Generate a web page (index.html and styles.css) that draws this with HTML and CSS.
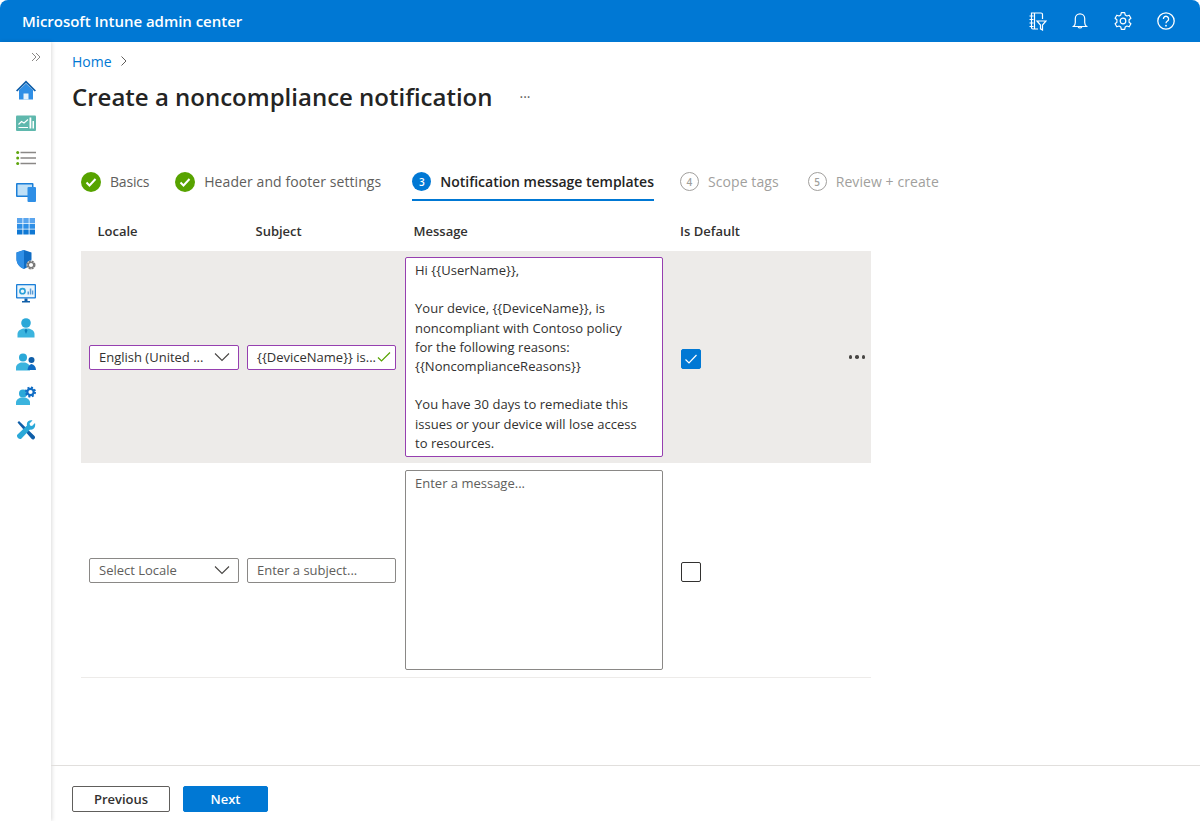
FILE: index.html
```html
<!DOCTYPE html>
<html lang="en">
  <head>
    <meta charset="UTF-8" />
    <meta name="viewport" content="width=device-width, initial-scale=1.0" />
    <title>Microsoft Intune admin center</title>
    <link rel="stylesheet" href="styles.css">
  </head>
  <body>
    <header class="topbar">
      <div class="brand">Microsoft Intune admin center</div>
      <div class="top-icons">
        <svg viewBox="0 0 20 20" width="20" height="20"><path d="M4.500 9V2h9.500a1.500 1.500 0 0 1 1.500 1.500V8M4.500 9v7.500a1.500 1.500 0 0 0 1.500 1.500h5M7.500 2v16M2.500 5h4M2.500 8.500h4M2.500 12h4M2.500 15.500h4M10 10h9l-3.500 4v5l-2-1.200V14z" fill="none" stroke="#fff" stroke-width="1.200"/></svg>
        <svg viewBox="0 0 20 20" width="20" height="20"><path d="M3.500 15.500c1.200-1 1.800-2.200 1.800-4V7.500a4.700 4.700 0 0 1 9.400 0v4c0 1.800.6 3 1.800 4zM8.200 15.700a1.900 1.900 0 0 0 3.600 0" fill="none" stroke="#fff" stroke-width="1.200"/></svg>
        <svg viewBox="0 0 20 20" width="20" height="20"><circle cx="10" cy="10" r="2.800" fill="none" stroke="#fff" stroke-width="1.200"/><path d="M8.300 1.600h3.400l.5 2.400 1.700 1 2.300-.8 1.700 3-1.800 1.600v2.400l1.800 1.600-1.700 3-2.300-.8-1.700 1-.5 2.400H8.300l-.5-2.400-1.700-1-2.300.8-1.700-3 1.800-1.600V8.800L2.100 7.200l1.700-3 2.300.8 1.700-1z" fill="none" stroke="#fff" stroke-width="1.200" stroke-linejoin="round"/></svg>
        <svg viewBox="0 0 20 20" width="20" height="20"><circle cx="10" cy="10" r="8.200" fill="none" stroke="#fff" stroke-width="1.300"/><path d="M7.400 7.900a2.600 2.600 0 1 1 4.100 2.100c-1 .7-1.500 1.100-1.500 2.300" fill="none" stroke="#fff" stroke-width="1.300"/><circle cx="10" cy="14.700" r=".9" fill="#fff"/></svg>
      </div>
    </header>

    <div class="shell">
      <nav class="sidebar">
        <svg class="collapse" viewBox="0 0 10 10" width="10" height="10"><path d="M1 1l4 4-4 4M5 1l4 4-4 4" fill="none" stroke="#8a8886" stroke-width="1"/></svg>
        <!-- home -->
        <svg viewBox="0 0 20 20" width="20" height="20"><path d="M3 10v9.500h14V10l-7-6.500z" fill="#2f8fe6"/><path d="M7.500 13.500h5v6h-5z" fill="#e6f2fb"/><path d="M0 10.500L10 .5l10 10-1.300 1L10 3 1.300 11.500z" fill="#0f5ea8"/></svg>
        <!-- dashboard -->
        <svg viewBox="0 0 20 20" width="20" height="20"><rect y="1.500" width="20" height="15.500" rx="1" fill="#5fb8ad"/><path d="M2.500 10.500l3-3 2.500 1.500 4-3.500" fill="none" stroke="#fff" stroke-width="1.100"/><path d="M2.500 13.500h9.500" stroke="#fff" stroke-width="1"/><path d="M13.500 3.500h1.800v11h-1.800zM16.500 7h1.500v7.500h-1.500z" fill="#fff"/></svg>
        <!-- list -->
        <svg viewBox="0 0 20 20" width="20" height="20"><path d="M4.500 4.500H20M4.500 10H20M4.500 15.500H20" stroke="#8a8886" stroke-width="1.500"/><circle cx="1.700" cy="4.500" r="1.500" fill="#5ea50d"/><circle cx="1.700" cy="10" r="1.500" fill="#5ea50d"/><circle cx="1.700" cy="15.500" r="1.500" fill="#5ea50d"/></svg>
        <!-- devices -->
        <svg viewBox="0 0 20 20" width="20" height="20"><rect y="1" width="17.500" height="14" rx="1" fill="#1b7fd8"/><rect x="1.500" y="2.500" width="14.500" height="11" fill="#bfe0f7"/><rect x="11.500" y="5" width="8.500" height="15" rx="1" fill="#2f8fe6"/></svg>
        <!-- apps -->
        <svg viewBox="0 0 20 20" width="20" height="20"><path d="M1 2h5.500v5H1zM7.300 2h5.400v5H7.300zM13.500 2H19v5h-5.500z" fill="#5aa5ee"/><path d="M1 7.800h5.500v5H1zM7.300 7.800h5.400v5H7.300zM13.500 7.800H19v5h-5.500z" fill="#2f8fe6"/><path d="M1 13.600h5.500v5H1zM7.300 13.600h5.400v5H7.300zM13.500 13.600H19v5h-5.500z" fill="#0f78d4"/></svg>
        <!-- endpoint security -->
        <svg viewBox="0 0 20 20" width="20" height="20"><path d="M8 0l7.500 2.500V9c0 5-3.500 8.500-7.500 10C4 17.500.5 14 .5 9V2.500z" fill="#0f6cc4"/><path d="M8 0v19C4 17.500.5 14 .5 9V2.500z" fill="#2f8fe6"/><circle cx="15" cy="15" r="4.500" fill="#fff"/><circle cx="15" cy="15" r="3.400" fill="none" stroke="#7a7a7a" stroke-width="2.200" stroke-dasharray="2 .7"/><circle cx="15" cy="15" r="2.700" fill="none" stroke="#7a7a7a" stroke-width="1.300"/></svg>
        <!-- reports -->
        <svg viewBox="0 0 20 20" width="20" height="20"><rect y="0" width="20" height="14.500" rx="1" fill="#1b7fd8"/><rect x="1.300" y="1.300" width="17.400" height="11.900" fill="#eaf5fc"/><circle cx="6.500" cy="7.200" r="2.600" fill="none" stroke="#2aa0d8" stroke-width="1.600"/><path d="M11.500 10.500v-3h1.500v3zM13.800 10.500v-6h1.500v6zM16 10.500v-4h1.300v4z" fill="#5b9bd5"/><path d="M8.500 14.500h3V17h2.500v1.500H6V17h2.500z" fill="#0f5ea8"/></svg>
        <!-- users -->
        <svg viewBox="0 0 20 20" width="20" height="20"><circle cx="10" cy="5" r="4.800" fill="#2aa8d8"/><path d="M1.500 19.500V16c0-3 3-5 6-5.500h5c3 .5 6 2.500 6 5.500v3.500z" fill="#3bb4de"/><path d="M10 10.500l-1.500 2 1.500 3.500 1.500-3.500z" fill="#0f7fb8"/></svg>
        <!-- groups -->
        <svg viewBox="0 0 20 20" width="20" height="20"><circle cx="7" cy="5.500" r="4" fill="#2aa8d8"/><path d="M0 18.500V15.500c0-2.500 2.500-4.500 5-5h4c2.500.5 5 2.500 5 5v3z" fill="#3bb4de"/><circle cx="15.500" cy="8" r="3" fill="#0f5ea8"/><path d="M11.500 18c.5-3 1.500-5.500 4-6 2.500.5 4.500 2.500 4.500 6z" fill="#0f6cc4"/></svg>
        <!-- tenant admin -->
        <svg viewBox="0 0 20 20" width="20" height="20"><circle cx="7" cy="7.500" r="4" fill="#2aa8d8"/><path d="M0 19v-2.500c0-2.500 2.500-4.500 5-5h4c2.500.5 5 2.500 5 5V19z" fill="#3bb4de"/><circle cx="14.500" cy="6" r="3.200" fill="none" stroke="#0f6cc4" stroke-width="2.200"/><circle cx="14.500" cy="6" r="4.600" fill="none" stroke="#0f6cc4" stroke-width="1.800" stroke-dasharray="2 1.600"/></svg>
        <!-- troubleshooting -->
        <svg viewBox="0 0 20 20" width="20" height="20"><path d="M1.500 2.500L3 1l15.500 15c.8 1 .8 2-.3 3-1 .8-2 .6-2.700-.3z" fill="#0f5ea8"/><path d="M19 3l-3 3-2-.5-.5-2 3-3c-3-.8-6.500 1.500-5.500 5L1.500 14.500c-2 2 2 6 4 4L14 9.500c3.500 1 6-2.500 5-6.500z" fill="#2aa8d8"/></svg>
      </nav>

      <main class="content">
        <div class="page">
          <div class="crumbs"><a class="crumb-link">Home</a><svg viewBox="0 0 8 12" width="8" height="12"><path d="M1.500 1.500L6 6l-4.500 4.500" fill="none" stroke="#605e5c" stroke-width="1"/></svg></div>
          <div class="title-row">
            <h1>Create a noncompliance notification</h1>
            <span class="title-more">···</span>
          </div>

          <ol class="steps">
            <li class="step basics">
              <svg class="step-done" viewBox="0 0 20 20" width="20" height="20"><circle cx="10" cy="10" r="10" fill="#57a300"/><path d="M5.500 10.500l3 3 6-6.500" fill="none" stroke="#fff" stroke-width="2"/></svg>
              Basics
            </li>
            <li class="step">
              <svg class="step-done" viewBox="0 0 20 20" width="20" height="20"><circle cx="10" cy="10" r="10" fill="#57a300"/><path d="M5.500 10.500l3 3 6-6.500" fill="none" stroke="#fff" stroke-width="2"/></svg>
              Header and footer settings
            </li>
            <li class="step current"><span class="num">3</span>Notification message templates</li>
            <li class="step todo"><span class="num">4</span>Scope tags</li>
            <li class="step todo"><span class="num">5</span>Review + create</li>
          </ol>

          <div class="grid-head row-cols">
            <div>Locale</div>
            <div>Subject</div>
            <div>Message</div>
            <div>Is Default</div>
          </div>

          <div class="row row-cols selected">
            <div class="field filled"><span class="val">English (United ...</span><svg viewBox="0 0 16 10" width="16" height="10"><path d="M1 1.500l7 7 7-7" fill="none" stroke="#484644" stroke-width="1.100"/></svg></div>
            <div class="field filled"><span class="val">{{DeviceName}} is...</span><svg viewBox="0 0 14 12" width="14" height="12"><path d="M1 6.500l3.500 3.500L13 1.500" fill="none" stroke="#57a300" stroke-width="1.200"/></svg></div>
            <div class="msg filled">Hi {{UserName}},

Your device, {{DeviceName}}, is
noncompliant with Contoso policy
for the following reasons:
{{NoncomplianceReasons}}

You have 30 days to remediate this
issues or your device will lose access
to resources.</div>
            <div class="check on"><svg viewBox="0 0 14 12" width="14" height="12"><path d="M1.500 6.500l3.500 3.500 7.500-8" fill="none" stroke="#fff" stroke-width="1.200"/></svg></div>
            <div class="row-more"><i></i><i></i><i></i></div>
          </div>

          <div class="row row-cols blank">
            <div class="field"><span class="hint">Select Locale</span><svg viewBox="0 0 16 10" width="16" height="10"><path d="M1 1.500l7 7 7-7" fill="none" stroke="#484644" stroke-width="1.100"/></svg></div>
            <div class="field"><span class="hint">Enter a subject...</span></div>
            <div class="msg"><span class="hint">Enter a message...</span></div>
            <div class="check"></div>
          </div>
        </div>

        <footer class="actions">
          <button class="btn">Previous</button>
          <button class="btn primary">Next</button>
        </footer>
      </main>
    </div>
  </body>
</html>
```

FILE: styles.css
```css
* {
  box-sizing: border-box;
}

html,
body {
  height: 100%;
}

body {
  margin: 0;
  font-family: "Open Sans", "Noto Sans", sans-serif;
  font-size: 13px;
  color: #323130;
  background-color: #fff;
  overflow: hidden;
}

.topbar {
  height: 42px;
  background-color: #0078d4;
  color: white;
  display: flex;
  align-items: center;
  justify-content: space-between;
  padding: 0 24px 0 22px;
  border-radius: 8px 8px 0 0;
}

.brand {
  font-size: 15px;
  font-weight: 600;
  letter-spacing: -0.03px;
}

.top-icons {
  display: flex;
  gap: 23px;
}

.shell {
  display: flex;
  height: 779px;
}

.sidebar {
  width: 51px;
  flex: none;
  display: flex;
  flex-direction: column;
  align-items: center;
  gap: 14px;
  padding: 10px 0 0 0;
  background-color: #fff;
  box-shadow: 1px 0 4px rgba(0, 0, 0, 0.14);
}

.sidebar .collapse {
  margin: 0 0 4px 21px;
}

.content {
  flex: 1;
  display: flex;
  flex-direction: column;
  min-width: 0;
}

.page {
  flex: 1;
  padding: 9px 0 0 21px;
}

.crumbs {
  display: flex;
  align-items: center;
  gap: 8px;
  height: 20px;
  font-size: 14px;
}

.crumb-link {
  color: #0078d4;
}

.title-row {
  display: flex;
  align-items: center;
  margin-top: 7px;
  height: 36px;
}

h1 {
  margin: 0;
  font-size: 24px;
  font-weight: 600;
  color: #242424;
}

.title-more {
  margin-left: 27px;
  font-size: 14px;
  color: #605e5c;
}

.steps {
  list-style: none;
  display: flex;
  margin: 50px 0 0;
  padding: 0 0 0 9px;
  gap: 26px;
}

.step {
  display: flex;
  align-items: center;
  gap: 9px;
  height: 37px;
  padding-bottom: 2px;
  font-size: 14px;
  letter-spacing: 0.08px;
  color: #605e5c;
}

.basics {
  letter-spacing: -0.2px;
}

.num {
  width: 19px;
  height: 19px;
  border-radius: 50%;
  display: flex;
  align-items: center;
  justify-content: center;
  font-size: 10px;
  font-weight: 600;
  letter-spacing: 0;
}

.current {
  margin-left: 5px;
  color: #242424;
  font-weight: 600;
  border-bottom: 2px solid #0078d4;
  padding-bottom: 0;
  letter-spacing: -0.02px;
}

.current .num {
  background-color: #0078d4;
  color: white;
}

.todo {
  color: #a19f9d;
}

.todo .num {
  border: 1px solid #a19f9d;
}

.todo:last-child {
  margin-left: 3px;
}

.row-cols {
  display: grid;
  grid-template-columns: 158px 158px 275px 1fr;
  width: 790px;
  margin-left: 9px;
  padding-left: 8px;
}

.grid-head {
  height: 50px;
  align-items: center;
  font-weight: 600;
  padding-top: 10px;
}

.grid-head div {
  padding-left: 8.500px;
}

.grid-head div:last-child {
  padding-left: 0;
}

.row {
  position: relative;
  align-items: center;
}

.selected {
  background-color: #edebe9;
  height: 212px;
}

.blank {
  height: 215px;
  border-bottom: 1px solid #edebe9;
}

.field {
  width: 150px;
  height: 25px;
  display: flex;
  align-items: center;
  justify-content: space-between;
  padding: 0 8px 0 9px;
  background-color: #fff;
  border: 1px solid #8a8886;
  border-radius: 2px;
  white-space: nowrap;
}

.field:nth-child(2) {
  width: 149px;
  padding: 0 4px 0 9px;
}

.msg {
  width: 258px;
  height: 200px;
  padding: 3px 9px;
  background-color: #fff;
  border: 1px solid #8a8886;
  border-radius: 2px;
  white-space: pre-line;
  line-height: 19.2px;
}

.filled {
  border-color: #963fb0;
}

.msg.filled {
  letter-spacing: 0.03px;
}

.hint {
  color: #605e5c;
}

.check {
  width: 20px;
  height: 20px;
  margin: 3px 0 0 0.500px;
  border: 1px solid #323130;
  border-radius: 2px;
  display: flex;
  align-items: center;
  justify-content: center;
}

.check.on {
  background-color: #0078d4;
  border-color: #0078d4;
}

.row-more {
  position: absolute;
  right: 6px;
  top: 104px;
  display: flex;
  gap: 3px;
}

.row-more i {
  width: 3.500px;
  height: 3.500px;
  border-radius: 50%;
  background-color: #484644;
}

.actions {
  height: 56px;
  border-top: 1px solid #e1dfdd;
  padding: 20px 0 0 21px;
  display: flex;
  gap: 13px;
  align-items: flex-start;
}

.btn {
  height: 26px;
  width: 98px;
  font-family: inherit;
  font-size: 13px;
  font-weight: 600;
  color: #323130;
  background-color: white;
  border: 1px solid #605e5c;
  border-radius: 2px;
  cursor: pointer;
}

.primary {
  width: 85px;
  color: white;
  background-color: #0078d4;
  border-color: #0078d4;
}
```
